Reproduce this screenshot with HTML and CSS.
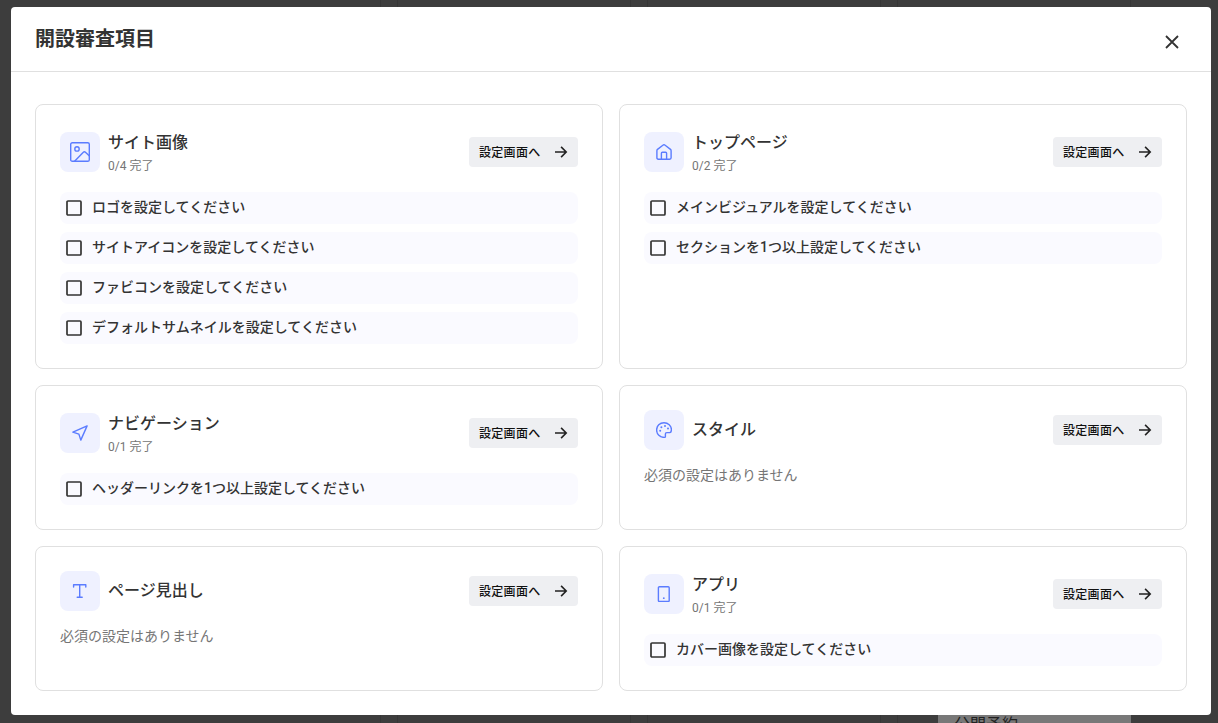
FILE: index.html
```html
<!DOCTYPE html>
<html lang="ja">
<head>
<meta charset="utf-8">
<title>開設審査項目</title>
<link rel="stylesheet" href="styles.css">
</head>
<body>
<svg class="defs" width="0" height="0">
  <symbol id="arrow" viewBox="0 0 14 14"><path d="M1 7H12M7.1 1.9L12.2 7L7.1 12.1"/></symbol>
  <symbol id="box" viewBox="0 0 16 16"><rect x="1" y="1" width="14" height="14" rx="1"/></symbol>
</svg>
<div class="backdrop">
  <div class="pane"></div><div class="pane"></div><div class="pane"></div><div class="pane"></div>
  <div class="menu">公開予約</div>
</div>
<main class="dialog">
  <header class="dialog-head">
    <h1>開設審査項目</h1>
    <svg class="close" viewBox="0 0 14 14"><path d="M1 1L13 13M13 1L1 13"/></svg>
  </header>
  <div class="grid">
    <section class="card">
      <div class="card-head">
        <div class="icon"><svg width="20" height="20" viewBox="0 0 20 20"><rect x=".7" y=".7" width="18.6" height="18.6" rx="1.6"/><circle cx="7" cy="6.9" r="2.2"/><path d="M4.6 19.2L13.1 10.4Q14.4 9.2 15.7 10.4L19.2 13.8"/></svg></div>
        <div class="label"><h2>サイト画像</h2><p class="count">0/4 完了</p></div>
        <button class="go"><span>設定画面へ</span><svg><use href="#arrow"/></svg></button>
      </div>
      <ul class="list">
        <li><svg><use href="#box"/></svg><span>ロゴを設定してください</span></li>
        <li><svg><use href="#box"/></svg><span>サイトアイコンを設定してください</span></li>
        <li><svg><use href="#box"/></svg><span>ファビコンを設定してください</span></li>
        <li><svg><use href="#box"/></svg><span>デフォルトサムネイルを設定してください</span></li>
      </ul>
    </section>
    <section class="card">
      <div class="card-head">
        <div class="icon"><svg width="16" height="16" viewBox="0 0 16 16"><path d="M.9 6.7Q.9 5.9 1.5 5.4L7.2 1Q8 .4 8.8 1L14.5 5.4Q15.1 5.9 15.1 6.7V13.8Q15.1 15.2 13.7 15.2H2.3Q.9 15.2 .9 13.8ZM5.4 15V9.2Q5.4 8.2 6.4 8.2H9.6Q10.6 8.2 10.6 9.2V15"/></svg></div>
        <div class="label"><h2>トップページ</h2><p class="count">0/2 完了</p></div>
        <button class="go"><span>設定画面へ</span><svg><use href="#arrow"/></svg></button>
      </div>
      <ul class="list">
        <li><svg><use href="#box"/></svg><span>メインビジュアルを設定してください</span></li>
        <li><svg><use href="#box"/></svg><span>セクションを1つ以上設定してください</span></li>
      </ul>
    </section>
    <section class="card">
      <div class="card-head">
        <div class="icon"><svg width="16" height="16" viewBox="0 0 16 16"><path d="M15.1 .9L.9 7.2L6.9 9.1L8.8 15.1Z"/></svg></div>
        <div class="label"><h2>ナビゲーション</h2><p class="count">0/1 完了</p></div>
        <button class="go"><span>設定画面へ</span><svg><use href="#arrow"/></svg></button>
      </div>
      <ul class="list">
        <li><svg><use href="#box"/></svg><span>ヘッダーリンクを1つ以上設定してください</span></li>
      </ul>
    </section>
    <section class="card">
      <div class="card-head">
        <div class="icon"><svg width="16" height="16" viewBox="0 0 16 16"><path d="M8 .7C3.8 .7 .6 3.8 .6 8S3.9 15.4 8.4 15.4Q9.4 15.4 9.4 14.4V12Q9.4 10.6 10.8 10.6H13.8Q15.4 10.3 15.4 7.6C15.4 3.6 12.1 .7 8 .7Z"/><g class="dots"><circle cx="4.2" cy="8.8" r="1"/><circle cx="5.4" cy="5.2" r="1"/><circle cx="9" cy="4.1" r="1"/><circle cx="12" cy="6.5" r="1"/></g></svg></div>
        <div class="label"><h2>スタイル</h2></div>
        <button class="go"><span>設定画面へ</span><svg><use href="#arrow"/></svg></button>
      </div>
      <p class="none">必須の設定はありません</p>
    </section>
    <section class="card">
      <div class="card-head">
        <div class="icon"><svg width="16" height="16" viewBox="0 0 16 16"><path d="M1.6 4V1.8H13.8V4M7.7 1.8V14.2M5.2 14.2H10.2"/></svg></div>
        <div class="label"><h2>ページ見出し</h2></div>
        <button class="go"><span>設定画面へ</span><svg><use href="#arrow"/></svg></button>
      </div>
      <p class="none">必須の設定はありません</p>
    </section>
    <section class="card">
      <div class="card-head">
        <div class="icon"><svg width="16" height="16" viewBox="0 0 16 16"><rect x="2.4" y=".7" width="10.8" height="14.8" rx="1"/><g class="dots"><circle cx="7.8" cy="12.2" r=".9"/></g></svg></div>
        <div class="label"><h2>アプリ</h2><p class="count">0/1 完了</p></div>
        <button class="go"><span>設定画面へ</span><svg><use href="#arrow"/></svg></button>
      </div>
      <ul class="list">
        <li><svg><use href="#box"/></svg><span>カバー画像を設定してください</span></li>
      </ul>
    </section>
  </div>
</main>
</body>
</html>
```
FILE: styles.css
```css
* { box-sizing: border-box; margin: 0; padding: 0; }
body {
  width: 1218px; height: 723px; overflow: hidden;
  padding: 7px 7px 8px 11px;
  background: #3d3d3d; color: #333;
  font-family: Roboto, "Noto Sans CJK JP", sans-serif;
}
svg { fill: none; stroke: currentColor; flex: none; }
.defs { position: absolute; }
.backdrop {
  position: absolute; inset: 0; overflow: hidden;
  display: flex; gap: 16px; padding-left: 147px;
}
.pane { width: 234px; border: solid #363636; border-width: 0 1px; flex: none; }
.pane:first-child { border-left-color: transparent; }
.menu {
  position: absolute; left: 938px; top: 703px; width: 193px; height: 40px;
  padding: 10px 16px; background: #787878; color: #222;
  font-size: 16px; line-height: 24px;
}
.dialog {
  position: relative; width: 1200px; height: 708px;
  background: #fff; border-radius: 4px;
}
.dialog-head {
  display: flex; justify-content: space-between; align-items: center;
  height: 65px; padding: 0 32px 0 24px; border-bottom: 1px solid #e0e0e0;
}
h1 { font-size: 20px; font-weight: 700; line-height: 32px; }
.close { width: 14px; height: 14px; stroke-width: 1.8; margin-top: 6px; }
.grid {
  display: grid; grid-template-columns: 1fr 1fr;
  grid-template-rows: 265px 145px 145px; gap: 16px;
  padding: 32px 24px 24px;
}
.card {
  display: flex; flex-direction: column; gap: 16px;
  padding: 24px; border: 1px solid #e0e0e0; border-radius: 8px;
}
.card-head { display: flex; align-items: center; gap: 8px; }
.icon {
  display: flex; align-items: center; justify-content: center;
  width: 40px; height: 40px; border-radius: 8px;
  background: #eff1ff; color: #5b7cff;
}
.icon svg { stroke-width: 1.4; stroke-linejoin: round; stroke-linecap: round; }
.dots { fill: currentColor; stroke: none; }
.label { flex: 1; }
h2 { font-size: 16px; font-weight: 500; line-height: 28px; }
.count { padding-top: 1px; font-size: 12px; line-height: 17px; color: #757575; }
.go {
  display: flex; align-items: center; justify-content: space-between;
  width: 109px; height: 30px; padding: 0 10px;
  border: 0; border-radius: 4px; background: #eeeff2; color: #111;
  font-family: inherit; font-size: 12px; font-weight: 500; letter-spacing: .3px;
}
.go span { padding-bottom: 2px; }
.go svg { width: 14px; height: 14px; stroke-width: 1.6; color: #222; }
.list { display: flex; flex-direction: column; gap: 8px; margin-top: 1px; list-style: none; }
.list li {
  display: flex; align-items: center; gap: 10px;
  height: 32px; padding: 0 6px; border-radius: 8px; background: #fafaff;
  font-size: 14px; font-weight: 500; line-height: 20px;
}
.list span { padding-bottom: 2px; }
.list svg { width: 16px; height: 16px; stroke-width: 1.7; }
.none { font-size: 14px; line-height: 18px; color: #757575; }
```
